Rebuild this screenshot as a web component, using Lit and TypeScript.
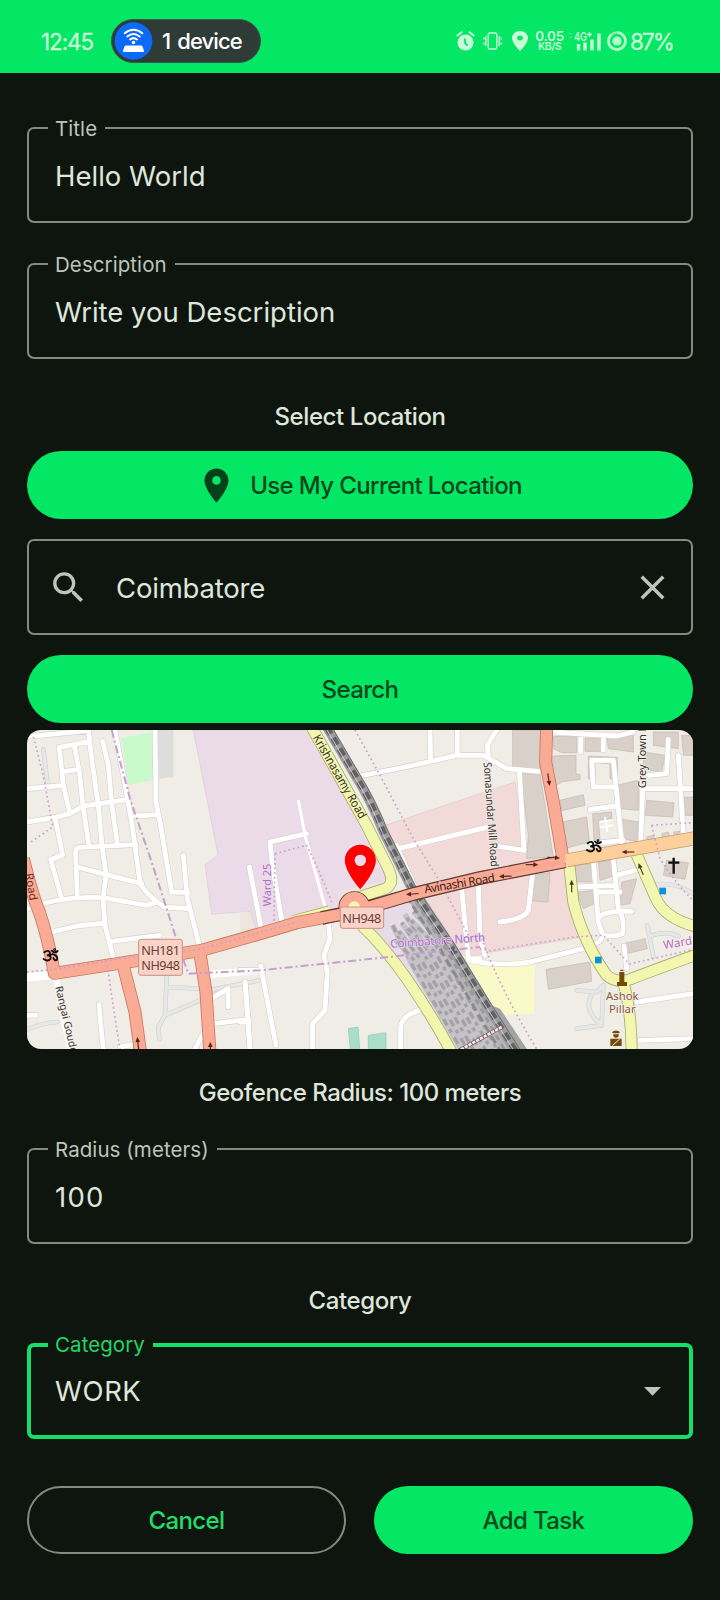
import { LitElement, html, css, svg } from "lit";
import { customElement, property } from "lit/decorators.js";

const PIN = "M12 2C8.13 2 5 5.13 5 9c0 5.25 7 13 7 13s7-7.75 7-13c0-3.87-3.13-7-7-7zm0 9.5a2.5 2.5 0 0 1 0-5 2.5 2.5 0 0 1 0 5z";

/* ---------- outlined text field ---------- */
@customElement("outlined-field")
class OutlinedField extends LitElement {
  @property() label = "";
  @property({ type: Boolean, reflect: true }) focused = false;

  static styles = css`
    :host { display: block; position: relative; height: 96px; box-sizing: border-box;
      border: 2px solid #818b81; border-radius: 7px; }
    :host([focused]) { border: 4px solid #14df68; }
    .label { position: absolute; top: -14px; left: 19px; padding: 0 8px 0 7px; background: #0e150e;
      font-size: 20.5px; line-height: 27px; color: #bcc6ba; letter-spacing: 0.07px; white-space: nowrap; }
    :host([focused]) .label { top: -16px; left: 17px; color: #1fd667; }
    .row { height: 100%; display: flex; align-items: center; padding: 1px 18px 0 26px; box-sizing: border-box;
      font-size: 27.5px; color: #dfe6db; }
    :host([focused]) .row { padding: 0 16px 1px 24px; }
    ::slotted(.grow) { flex: 1; }
  `;

  render() {
    return html`<div class="row"><slot></slot></div>
      ${this.label ? html`<span class="label">${this.label}</span>` : ""}`;
  }
}

/* ---------- status bar ---------- */
@customElement("status-bar")
class StatusBar extends LitElement {
  static styles = css`
    :host { display: flex; align-items: center; height: 73px; padding: 9px 48px 0 41px; box-sizing: border-box;
      background: #04e764; color: #c9fbd9; }
    .time { font-size: 22.5px; width: 70px; letter-spacing: -1.1px; -webkit-text-stroke: 0.3px #c9fbd9; }
    .pill { display: flex; align-items: center; width: 150px; height: 44px; box-sizing: border-box;
      border-radius: 22px; background: #2f3b36; border: 1px solid #3b5a48; padding-left: 2px; gap: 9px; color: #fff;
      font-size: 22px; font-weight: 500; letter-spacing: -0.9px; word-spacing: 2px; white-space: nowrap; }
    .right { margin-left: auto; display: flex; align-items: center; }
    .alarm { margin-right: 8px; }
    .vib { margin-right: 10px; }
    .pin { margin-right: 7px; }
    .speed { width: 29px; text-align: center; font-size: 13.5px; line-height: 11px; font-weight: 600; letter-spacing: -0.3px; margin-right: 4px; }
    .unit { font-size: 10.5px; line-height: 10px; font-weight: 600; letter-spacing: -0.5px; display: block; }
    .signal { margin-right: 6px; }
    .battery { margin-right: 3px; }
    .pct { font-size: 22.5px; width: 42px; letter-spacing: -1.9px; white-space: nowrap; -webkit-text-stroke: 0.3px #c9fbd9; }
    svg { display: block; }
  `;
  render() {
    return html`
      <span class="time">12:45</span>
      <div class="pill">
        <svg width="39" height="38" viewBox="0 0 39 38">
          <circle cx="19.5" cy="19" r="18.8" fill="#0b6bf8"/>
          <path d="M12 23.500h15q1.200 0 1.500 1l1.400 4q.4 1.500-1 1.500H10.100q-1.400 0-1-1.500l1.400-4q.3-1 1.500-1z" fill="#fff"/>
          <circle cx="19.500" cy="20.500" r="1.700" fill="#fff"/>
          <g fill="none" stroke="#fff" stroke-width="2" stroke-linecap="round">
            <path d="M10.700 11.300q8.800-7 17.600 0M13.300 14.500q6.200-4.900 12.400 0M16 17.500q3.500-2.700 7 0"/>
          </g>
        </svg>
        <span>1 device</span>
      </div>
      <div class="right">
        <svg class="alarm" width="19" height="20" viewBox="0 0 19 20">
          <circle cx="9.500" cy="11.500" r="8" fill="#c9fbd9"/>
          <path d="M1.300 4.500L5.500 1.200M17.700 4.500L13.500 1.200" stroke="#c9fbd9" stroke-width="2" stroke-linecap="round"/>
          <path d="M9 7.500V12l2.500 2.500" stroke="#04e764" stroke-width="1.800" fill="none"/>
        </svg>
        <svg class="vib" width="19" height="18" viewBox="0 0 19 18">
          <rect x="5.200" y="1" width="8.600" height="16" rx="1.500" fill="none" stroke="#c9fbd9" stroke-width="1.400"/>
          <path d="M2.800 4v10M16.200 4v10M.8 5.500v2M.8 10.500v2M18.200 5.500v2M18.200 10.500v2" stroke="#c9fbd9" stroke-width="1.400"/>
        </svg>
        <svg class="pin" width="16" height="20" viewBox="5 2 14 20" preserveAspectRatio="none"><path d="${PIN}" fill="#c9fbd9"/></svg>
        <span class="speed">0.05<span class="unit">KB/S</span></span>
        <svg class="signal" width="33" height="22" viewBox="0 -2 33 22">
          <text x="6" y="8.500" font-size="11.500" font-weight="600" fill="#c9fbd9" textLength="13" lengthAdjust="spacingAndGlyphs">4G</text>
          <path d="M21.500 0v5M19 2.500h5" stroke="#c9fbd9" stroke-width="1.300"/>
          <path d="M1.500 2.200l1-1 1 1M1.500 4.800l1 1 1-1" stroke="#7bf3a6" fill="none" stroke-width="1"/>
          <path d="M10.500 12v6.500M17 10.500v8M24 7.500v11M31 1.500v17" stroke="#c9fbd9" stroke-width="3.400"/>
        </svg>
        <svg class="battery" width="20" height="20" viewBox="0 0 20 20">
          <circle cx="10" cy="10" r="8.500" fill="none" stroke="#7ff3a9" stroke-width="2.600"/>
          <path d="M10 1.500A8.500 8.500 0 1 1 4.100 3.800" fill="none" stroke="#b3f8cb" stroke-width="2.600"/>
          <circle cx="10" cy="10" r="4.600" fill="#b3f8cb"/>
        </svg>
        <span class="pct">87%</span>
      </div>`;
  }
}

/* ---------- map ---------- */
const streets = [
  "M30 33L205 16M21 190L130 180M118 66L210 48M205 14L215 100L235 240L247 370M118 66L130 180L148 255",
  "M163 62L178 140L190 250L207 360M135 138L172 133M248 48L265 120L275 235L292 355",
  "M285 14L310 150L335 290L360 470Q370 500 432 545L505 550M21 290L105 276L150 265L190 242L325 222",
  "M105 276L128 390L92 402L125 520M348 358L180 366Q165 368 167 385L172 515M172 425L255 447L365 475",
  "M247 365L258 450L249 520L255 600L282 705M21 552Q120 510 250 517L380 540L405 532",
  "M90 622L170 602L255 593M275 648L420 630M405 14L408 230L420 290L455 500L505 502M345 272L415 268",
  "M490 390L502 520L542 675M688 425L724 610M860 325L750 350L756 410L786 592",
  "M925 590L930 640L912 690L922 740L915 855L878 895L878 971M1205 852Q1145 870 1142 905V971",
  "M660 735H730M722 722L768 960M675 770L690 971M660 890H688",
  "M237 838Q242 900 250 971M525 971L552 920M580 895L685 882M676 775L690 971M570 822L624 790L625 845M21 870H48M300 965L340 958",
  "M1005 155L1170 122L1310 90H1390L1460 130L1555 138M1230 14L1232 102M1312 14V88M1135 370L1400 306",
  "M1430 14L1402 60L1405 92M1498 135L1512 375L1415 360M1128 360L1182 480M1325 490L1345 700H1380M1375 480L1380 640L1395 690",
  "M1537 450L1525 555Q1515 580 1440 590M1345 705Q1450 725 1530 710L1690 670Q1745 655 1748 630",
  "M1595 20L1790 32L1840 20M1682 30V80M1750 30V75M1715 105L1720 185H1785M1715 105H1780L1805 350M1710 252L1790 242M1715 355L1810 345",
  "M1865 190H2015M1868 190L1862 355M1975 90L1990 325M1945 42L1940 145L1885 150",
  "M1720 405L1735 590L1750 635M1780 400L1795 550Q1815 580 1808 625Q1790 635 1750 630M1670 485L1785 480M1790 450L1855 432M1735 500H1800M1735 580Q1745 555 1835 558",
  "M1812 662L1820 730M1850 830L2020 805M1860 945L2020 940",
];
const lanes = [
  "M440 755L435 870L415 905L418 942M440 785L580 792L720 765M435 870L540 825L600 800M21 912Q80 890 112 890M70 72L82 170",
  "M1890 480Q1960 465 2020 505M1670 795L1730 800L1750 780L1745 900L1670 910M1720 800Q1685 850 1740 895M1882 600L1900 695M1890 632Q1940 615 1975 632",
];
const buildings = [
  "M1478 14H1562L1558 135L1478 128Z", "M1502 145H1560L1600 395L1520 400L1525 330Z", "M1535 450L1590 442L1584 530L1532 526Z",
  "M1600 34L1670 30V82H1625L1600 70Z", "M1695 38H1745V78H1695Z", "M1760 35L1840 30V80L1765 70Z", "M1598 92L1668 90V145L1680 148V162L1625 170L1600 185Z",
  "M1705 92L1792 96V160H1770V115L1725 112V165L1705 160Z", "M1620 225L1690 208L1695 240L1625 256Z", "M1790 180L1855 165V255L1800 250Z",
  "M1628 290L1700 275L1708 350L1640 368Z", "M1718 265L1775 260V280L1735 285L1740 345L1722 350Z", "M1880 225L1962 232L1958 275L1876 270Z",
  "M1870 80L1935 90L1925 140L1870 132Z", "M1900 20H1975V70L1900 60Z", "M1985 30H2020V90H1990Z", "M1990 215H2020V270H1995Z", "M1795 280L1855 290V350L1810 340Z",
  "M1655 420L1715 415L1720 470L1670 470Z", "M1735 410L1775 405L1785 450L1740 465Z", "M1670 500L1722 495V535L1690 550Z", "M1805 470L1850 460L1830 535L1800 540Z",
  "M1940 405L2005 412L1995 462L1930 450Z", "M1578 732L1710 710L1715 768L1585 792Z", "M1810 655L1875 640L1882 670L1820 685Z",
  "M1880 335L1900 330L1905 350H1882ZM1925 325L1945 320L1950 340L1930 345ZM1960 320L1980 318V335H1965Z",
];
const trunk = [
  "M10 400Q40 520 58 560Q85 640 103 744L350 706L540 676Q700 632 830 592L1000 560L1180 506L1380 458L1635 408",
  "M310 722L345 860L362 985", "M541 690L558 800L570 985", "M1580 5L1577 110L1600 230L1630 408",
];
const secondary = [
  "M875 5L1040 300L1105 430Q1128 480 1090 492L1020 515", "M1025 600Q1090 660 1160 760T1300 990",
  "M1648 420L1660 530Q1690 650 1760 750Q1790 775 1830 762Q1900 735 2030 688", "M1808 765Q1835 850 1835 990", "M1850 388L1908 520Q1935 580 2030 604",
];
const boundaries = ["M275 14L330 220L395 410L440 550L475 660L505 745L720 735L1060 700L1380 665"];
const dotted = [
  "M40 35L70 150L98 305L30 352", "M21 740L100 733L300 700L540 672L830 590", "M262 720Q280 850 300 971",
  "M1005 14L1080 150L1180 340L1260 470L1345 630", "M765 385L860 360Q900 440 935 530M765 385L762 600",
  "M1380 670L1410 676L1660 635L1750 630L1828 716L2020 672", "M1385 640Q1440 790 1550 971",
  "M1895 300L2020 292M1895 300L1920 400Q1970 480 2020 525",
];
const rails = "M920 5L1005 150Q1050 220 1090 320L1175 490L1290 660L1400 840L1495 990";

/* Sidings fan out south of the level crossing; each one has its own start and dash phase. */
const yard = Array.from({ length: 9 }, (_, i) => {
  const x = 1118 + i * 9;
  const y = 600 + ((i * 53) % 70) - i * 9;
  return { d: `M${x} ${y}L${1180 + i * 13} ${725 - i * 9}L${1340 + i * 18} 1000`, offset: (i * 29) % 47 };
});

const om = (x: number, y: number) => svg`<g transform="translate(${x} ${y})" fill="none" stroke="#0c0c0c" stroke-width="5.500" stroke-linecap="round">
  <path d="M-20 -10Q-10 -18 -4 -11Q0 -3 -12 -1Q3 0 -2 10Q-10 19 -22 10M-4 0Q4 -7 10 -3Q22 4 18 12Q11 17 7 7M2 -15Q11 -6 20 -14"/><circle cx="11" cy="-18" r="1.500"/></g>`;
const arrow = (x: number, y: number, a: number, c = "#5a2418") => svg`<g transform="translate(${x} ${y}) rotate(${a})">
  <path d="M-18 0H8" stroke="${c}" stroke-width="3.500"/><path d="M20 0L5 -7V7Z" fill="${c}"/></g>`;

@customElement("street-map")
class StreetMap extends LitElement {
  static styles = css`
    :host { display: block; height: 319px; border-radius: 14px; overflow: hidden; }
    svg { display: block; width: 100%; height: 100%; font-family: "Noto Sans", sans-serif; }
    .line { fill: none; stroke-linejoin: round; }
    .round { stroke-linecap: round; }
    .mid { text-anchor: middle; dominant-baseline: central; }
    .halo { paint-order: stroke; stroke: #f6f0ea; stroke-width: 5px; stroke-linejoin: round; }
    .on-road { stroke: #f2f6ae; }
    .on-yard { stroke: #e3d8e4; stroke-width: 4px; }
  `;
  render() {
    const line = (list: string[], color: string, w: number, cls = "line round", dash = "") =>
      list.map((d) => svg`<path class="${cls}" d="${d}" stroke="${color}" stroke-width="${w}" stroke-dasharray="${dash}"/>`);
    return html`<svg viewBox="21 14 1998 957" preserveAspectRatio="none">
      <rect x="0" y="0" width="2040" height="1000" fill="#f0ede6"/>
      <path d="M520 14L593 385Q592 394 555 418L575 567L690 558L708 614L980 545L1120 480L1100 440L1030 290L875 14Z" fill="#ebdbe9" stroke="#dcc8da" stroke-width="2"/>
      <path d="M660 560L690 560L706 612L660 625Z" fill="#eee5de"/>
      <path d="M1050 570L1180 515L1290 690L1400 850L1480 985H1320L1160 740L1040 610Z" fill="#e7dbe8"/>
      <path d="M1095 300L1485 170L1520 375L1640 420L1665 560L1690 635L1400 682L1320 702L1180 490Z" fill="#f2dad9" stroke="#e6c6c4" stroke-width="2"/>
      <path d="M1325 690L1400 712L1545 698L1542 865L1440 868Z" fill="#fafac8"/>
      <path d="M305 38L398 20V165L325 178Z" fill="#c8facc"/>
      <path d="M410 14H460V155L418 160Z" fill="#dddddb"/>
      <path d="M985 910L1014 905L1020 985H992ZM1045 930L1098 922V985H1045Z" fill="#a9dfc9" stroke="#8cc8b0" stroke-width="2"/>
      <path d="M955 500L1100 465L1090 495L960 530Z" fill="#ece5df"/>
      ${buildings.map((d) => svg`<path d="${d}" fill="#d9d0c9" stroke="#c3b8ae" stroke-width="2"/>`)}
      ${line(lanes, "#cfd2d2", 14)}${line(lanes, "#e6e8e6", 10)}
      <path class="line" d="M108 755Q125 870 155 985" stroke="#fff" stroke-width="18"/>
      <path class="line" d="M15 757L105 748" stroke="#fff" stroke-width="26"/>
      <path class="line" d="M560 748L720 735" stroke="#fff" stroke-width="22"/>
      ${line(streets, "#d3d0cb", 18)}
      <path class="line" d="M835 225L855 330L928 590" stroke="#fff" stroke-width="9"/>
      ${line(streets, "#ffffff", 14.5)}
      <path class="line" d="M1740 290L1775 285M1740 305L1780 300M1755 275L1762 320" stroke="#fff" stroke-width="6"/>
      <path d="M1408 838L1440 850L1530 985H1480Z" fill="#a3a2a4"/>
      ${yard.map((t) => svg`<path class="line" d="${t.d}" stroke="#c6c2c8" stroke-width="17"/>
        <path class="line" d="${t.d}" stroke="#a3a2a6" stroke-width="10" stroke-dasharray="22 13 12 17" stroke-dashoffset="${t.offset}"/>`)}
      <path class="line" d="M1175 500L1285 665L1390 840L1490 1010" stroke="#b5b4b7" stroke-width="46"/>
      <path class="line" d="M1158 510L1260 670L1365 850L1460 1010" stroke="#8b8b8e" stroke-width="9" stroke-dasharray="25 13"/>
      <path class="line" d="M1172 505L1275 668L1380 845L1475 1010" stroke="#98989b" stroke-width="8" stroke-dasharray="17 14"/>
      <path class="line" d="${rails}" stroke="#9c9c9c" stroke-width="28"/>
      <path class="line" d="${rails}" stroke="#626265" stroke-width="18" stroke-dasharray="24 14"/>
      <path class="line" d="${rails}" stroke="#6c6c6e" stroke-width="3" transform="translate(14 -3)"/>
      <path class="line" d="${rails}" stroke="#dad9dc" stroke-width="2.500" transform="translate(-3 2)"/>
      ${line(secondary, "#a4ad6c", 36, "line")}
      ${line(secondary, "#f2f6ae", 31, "line")}
      <path class="line" d="M820 592L930 562" stroke="#a4ad6c" stroke-width="44"/>
      <path class="line" d="M818 592L932 562" stroke="#f2f6ae" stroke-width="40"/>
      <path class="line" d="M1640 405L2030 338" stroke="#c49a68" stroke-width="42"/>
      ${line(trunk, "#c9775f", 39, "line")}
      <circle cx="1003" cy="545" r="31" fill="none" stroke="#7a4034" stroke-width="33"/>
      <path class="line" d="M905 578L1000 558L1180 506L1380 458L1635 408" stroke="#5e3a32" stroke-width="41"/>
      ${line(trunk, "#f9ab95", 34, "line")}
      <circle cx="1003" cy="545" r="31" fill="#f4f7b8" stroke="#f9ab95" stroke-width="28"/>
      <path class="line" d="M1638 405L2030 338" stroke="#fccf9b" stroke-width="37"/>
      <path class="line" d="M1320 470L1620 412" stroke="#f3a08c" stroke-width="8" opacity=".5"/>
      ${line(dotted, "#c9a0cf", 5, "line", "5 9")}
      ${line(boundaries, "#c5a0cf", 6, "line", "24 9 6 9")}
      <path class="line" d="M1300 985L1445 905" stroke="#765c5e" stroke-width="12"/>
      <path class="line" d="M1300 985L1445 905" stroke="#f5e9e9" stroke-width="8" stroke-dasharray="10 3"/>

      <g font-size="36" fill="#33302e">
        <text class="mid halo on-road" transform="translate(960 153) rotate(60)" font-size="36" textLength="284" lengthAdjust="spacingAndGlyphs">Krishnasamy Road</text>
        <text class="mid" transform="translate(1318 473) rotate(-9.500)" textLength="214" font-size="35" fill="#3b1c14">Avinashi Road</text>
        <text class="mid halo" transform="translate(1415 267) rotate(86)" font-size="33" textLength="314" lengthAdjust="spacingAndGlyphs">Somasundar Mill Road</text>
        <text class="halo" transform="translate(1877 189) rotate(-90)" font-size="33">Grey Town Road</text>
        <text class="halo" transform="translate(106 785) rotate(77)" font-size="31">Rangai Gouder</text>
        <text transform="translate(15 446) rotate(80)" font-size="34" fill="#6b2a1c">Road</text>
      </g>
      <g fill="#b06fc6" font-size="33">
        <text class="mid" transform="translate(738 479) rotate(-90)" textLength="128">Ward 25</text>
        <text class="mid halo on-yard" transform="translate(1253 644) rotate(-4)" textLength="285" font-size="34">Coimbatore North</text>
        <text class="halo" transform="translate(1932 672) rotate(-10)" font-size="35">Ward</text>
      </g>
      ${arrow(1178, 506, 175)}${arrow(1535, 418, 0)}${arrow(1600, 397, 2)}${arrow(1457, 453, 178)}
      ${arrow(1586, 162, 82)}${arrow(1825, 380, 180)}${arrow(1655, 483, -90, "#3c3c20")}${arrow(1863, 432, -112, "#3c3c20")}
      ${arrow(354, 955, -97)}${arrow(571, 970, -90)}
      ${om(93, 691)}${om(1723, 364)}
      <path d="M1961 397V445M1945 412H1978" stroke="#0c0c0c" stroke-width="7"/>
      <rect x="1918" y="487" width="20" height="20" fill="#0b92da"/><rect x="1725" y="694" width="20" height="20" fill="#0b92da"/>
      <g fill="#734a08">
        <path d="M1798 740h15v30h8v12h-30v-12h7zM1801 737h9v-4h-9z"/>
        <path d="M1776 920q12-9 24 0l-3 4h-18zM1780 927h16v6q-8 9-16 0zM1771 940h34v22h-34z"/>
        <path d="M1777 961L1799 941" stroke="#f1eee8" stroke-width="3"/>
      </g>
      <g class="halo" fill="#84593a" font-size="34" text-anchor="middle">
        <text x="1807" y="823">Ashok</text><text x="1807" y="863">Pillar</text>
      </g>
      <g fill="#f8d3c8" stroke="#cf8f80" stroke-width="3">
        <rect x="356" y="642" width="131" height="108" rx="7"/><rect x="961" y="545" width="130" height="64" rx="7"/>
      </g>
      <g fill="#6e3c32" font-size="38">
        <text x="364" y="690" textLength="116">NH181</text><text x="364" y="733" textLength="116">NH948</text>
        <text x="967" y="593" textLength="117">NH948</text>
      </g>
      <path d="${PIN}" fill="#fe0000" transform="translate(941 344.600) scale(6.670 6.700)"/>
      <circle cx="1021" cy="405" r="17" fill="#ebdbe9"/>
    </svg>`;
  }
}

/* ---------- screen ---------- */
@customElement("app-root")
class AppRoot extends LitElement {
  static styles = css`
    :host { display: block; min-height: 1600px; background: #0e150e; font-family: Inter, "Liberation Sans", sans-serif; }
    .form { display: flex; flex-direction: column; padding: 54px 27px 46px; }
    .gap { margin-top: 40px; }
    .heading { font-size: 24px; line-height: 32px; font-weight: 500; text-align: center; color: #dfe6db; letter-spacing: -0.4px; }
    .h-loc { margin: 42px 0 18px; }
    .h-geo { margin: 28px 0 39px; letter-spacing: -0.5px; }
    .h-cat { margin: 41px 0 26px; }
    .btn { height: 68px; border-radius: 34px; background: #04e764; color: #05461b; font-size: 24px; font-weight: 500;
      letter-spacing: -0.62px; padding-top: 1px;
      display: flex; align-items: center; justify-content: center; box-sizing: border-box; }
    .use { gap: 13px; padding-right: 2px; }
    .search { margin-top: 20px; }
    .find { margin-top: 20px; margin-bottom: 7px; }
    .glass { margin: 0 27px 0 -7px; }
    .value { white-space: nowrap; }
    .tight { letter-spacing: -0.2px; }
    .wide { letter-spacing: 0.5px; }
    .digits { letter-spacing: 1.2px; }
    .actions { display: grid; grid-template-columns: 1fr 1fr; gap: 28px; margin-top: 47px; }
    .outline { background: none; border: 2px solid #818b81; color: #22dc6c; }
    svg { display: block; flex: none; }
  `;
  render() {
    return html`
      <status-bar></status-bar>
      <div class="form">
        <outlined-field label="Title"><span class="value grow">Hello World</span></outlined-field>
        <outlined-field class="gap" label="Description"><span class="value grow">Write you Description</span></outlined-field>
        <div class="heading h-loc">Select Location</div>
        <div class="btn use">
          <svg width="41" height="41" viewBox="0 0 24 24"><path d="${PIN}" fill="#04401a"/></svg>
          <span>Use My Current Location</span>
        </div>
        <outlined-field class="search">
          <svg class="glass" width="41" height="41" viewBox="0 0 24 24"><path fill="#bcc6ba" d="M15.500 14h-.79l-.28-.27A6.471 6.471 0 0 0 16 9.500 6.500 6.500 0 1 0 9.500 16c1.610 0 3.090-.59 4.230-1.570l.27.28v.79l5 4.990L20.490 19l-4.990-5zm-6 0C7.010 14 5 11.990 5 9.500S7.010 5 9.500 5 14 7.010 14 9.500 11.990 14 9.500 14z"/></svg>
          <span class="value grow tight">Coimbatore</span>
          <svg width="41" height="41" viewBox="0 0 24 24"><path fill="#bcc6ba" d="M19 6.410L17.590 5 12 10.590 6.410 5 5 6.410 10.590 12 5 17.590 6.410 19 12 13.410 17.590 19 19 17.590 13.410 12z"/></svg>
        </outlined-field>
        <div class="btn find">Search</div>
        <street-map></street-map>
        <div class="heading h-geo">Geofence Radius: 100 meters</div>
        <outlined-field label="Radius (meters)"><span class="value grow digits">100</span></outlined-field>
        <div class="heading h-cat">Category</div>
        <outlined-field label="Category" focused>
          <span class="value grow wide">WORK</span>
          <svg width="41" height="41" viewBox="0 0 24 24"><path fill="#bcc6ba" d="M7 10l5 5 5-5z"/></svg>
        </outlined-field>
        <div class="actions">
          <div class="btn outline">Cancel</div>
          <div class="btn">Add Task</div>
        </div>
      </div>`;
  }
}
